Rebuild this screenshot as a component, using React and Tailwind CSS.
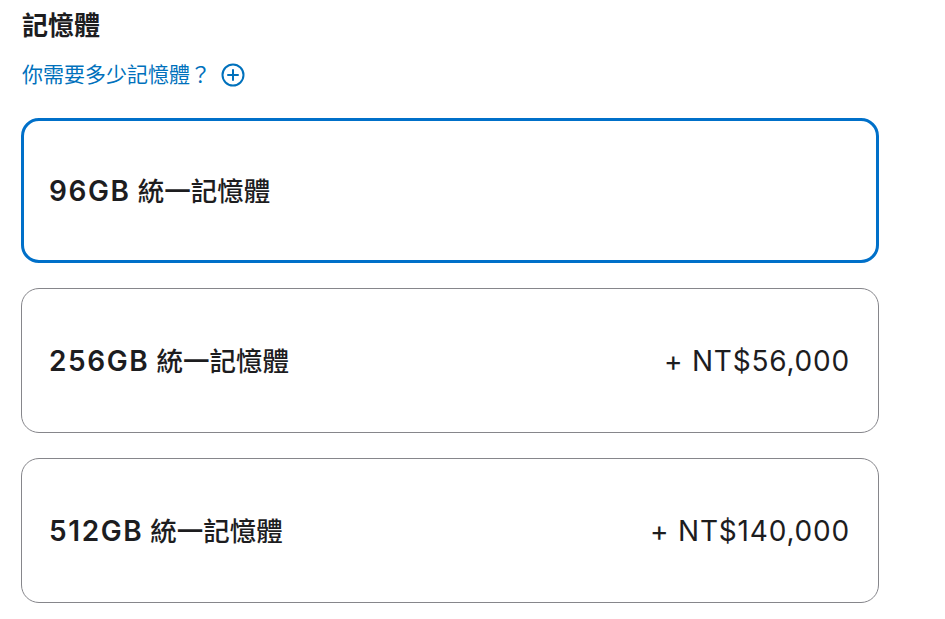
import React from "react";

const font = { fontFamily: '"Inter", "Noto Sans CJK TC", sans-serif' };

function Card({ size, price, selected }) {
  return (
    <div
      className={
        "flex h-[145px] items-center justify-between rounded-[18px] bg-white " +
        (selected
          ? "border-[3px] border-[#0070c9] pl-[25px] pr-[26px]"
          : "border border-[#86868b] pl-[27px] pr-[28px]")
      }
    >
      <span className="flex items-baseline text-[#1d1d1f]">
        <span className="text-[28px] font-semibold leading-[32px] tracking-[1.6px]">{size}</span>
        <span className="ml-[7px] text-[26.5px] font-medium leading-[32px]">統一記憶體</span>
      </span>
      {price && (
        <span className="text-[28px] font-normal leading-[32px] tracking-[0.8px] text-[#1d1d1f]">{price}</span>
      )}
    </div>
  );
}

export default function App() {
  return (
    <div className="min-h-[619px] w-[945px] bg-white pl-[21px] pr-[66px] pt-[8px]" style={font}>
      <h2 className="pl-[1px] text-[26px] font-semibold leading-[36px] text-[#1d1d1f]">記憶體</h2>
      <div className="mt-[17px] flex items-center gap-[10px] pl-[1px] text-[21px] leading-[28px] text-[#0071bc]">
        <span>你需要多少記憶體？</span>
        <svg width="24" height="24" viewBox="0 0 24 24" fill="none" stroke="currentColor" strokeWidth="2">
          <circle cx="12" cy="12" r="10.5" />
          <path d="M12 7v10M7 12h10" strokeLinecap="round" />
        </svg>
      </div>
      <div className="mt-[29px] flex flex-col gap-[25px]">
        <Card size="96GB" selected />
        <Card size="256GB" price="+ NT$56,000" />
        <Card size="512GB" price="+ NT$140,000" />
      </div>
    </div>
  );
}
